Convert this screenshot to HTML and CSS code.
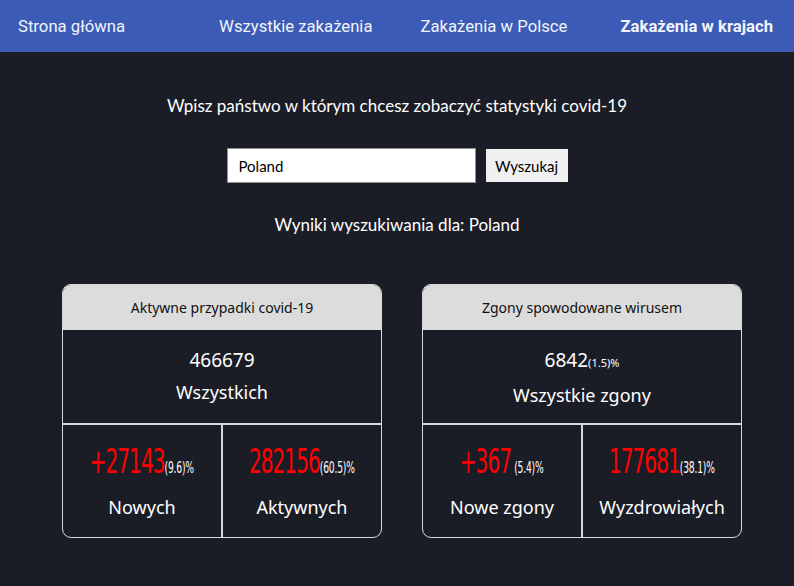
FILE: index.html
```html
<!DOCTYPE html>
<html lang="pl">
<head>
<meta charset="utf-8">
<title>Zakażenia w krajach</title>
<link rel="stylesheet" href="styles.css">
</head>
<body>
<nav class="nav">
  <a class="brand" href="#">Strona główna</a>
  <div class="links">
    <a href="#">Wszystkie zakażenia</a>
    <a href="#">Zakażenia w Polsce</a>
    <a class="active" href="#">Zakażenia w krajach</a>
  </div>
</nav>
<main class="main">
  <p class="prompt">Wpisz państwo w którym chcesz zobaczyć statystyki covid-19</p>
  <form class="search">
    <input class="search-input" type="text" value="Poland">
    <button class="search-btn" type="button">Wyszukaj</button>
  </form>
  <p class="result">Wyniki wyszukiwania dla: Poland</p>
  <div class="cards">
    <section class="card">
      <header class="card-head">Aktywne przypadki covid-19</header>
      <div class="card-top">
        <div class="top-num">466679</div>
        <div class="label">Wszystkich</div>
      </div>
      <div class="card-bottom">
        <div class="cell">
          <div class="big"><span class="red">+27143</span><span class="pct">(9.6)%</span></div>
          <div class="label">Nowych</div>
        </div>
        <div class="cell">
          <div class="big"><span class="red">282156</span><span class="pct">(60.5)%</span></div>
          <div class="label">Aktywnych</div>
        </div>
      </div>
    </section>
    <section class="card">
      <header class="card-head">Zgony spowodowane wirusem</header>
      <div class="card-top">
        <div class="top-num">6842<span class="top-pct">(1.5)%</span></div>
        <div class="label">Wszystkie zgony</div>
      </div>
      <div class="card-bottom">
        <div class="cell">
          <div class="big"><span class="red">+367</span> <span class="pct">(5.4)%</span></div>
          <div class="label">Nowe zgony</div>
        </div>
        <div class="cell">
          <div class="big"><span class="red">177681</span><span class="pct">(38.1)%</span></div>
          <div class="label">Wyzdrowiałych</div>
        </div>
      </div>
    </section>
  </div>
</main>
</body>
</html>
```
FILE: styles.css
```css
html, body {
  margin: 0;
  padding: 0;
  background: #1b1d26;
  height: 100%;
}
body {
  font-family: "Lato", "Noto Sans", sans-serif;
  color: #fff;
}
.nav {
  height: 52px;
  background: #3b5bb6;
  display: flex;
  align-items: center;
  padding: 0 21px 0 18px;
  font-family: "Roboto", sans-serif;
  font-size: 16.7px;
}
.nav a {
  color: #f2f4fb;
  text-decoration: none;
}
.links {
  margin-left: auto;
  display: flex;
  gap: 48px;
}
.links .active {
  font-weight: 700;
  margin-left: 5px;
}
.main {
  display: flex;
  flex-direction: column;
  align-items: center;
}
.prompt {
  margin: 42px 0 0;
  font-size: 17px;
  line-height: 24px;
}
.search {
  margin: 30px 0 0;
  display: flex;
  gap: 10px;
  align-items: center;
}
.search-input {
  box-sizing: border-box;
  width: 249px;
  height: 35px;
  border: 1px solid #8f8f8f;
  padding: 0 11px;
  font-family: "Lato", sans-serif;
  font-size: 15px;
  color: #000;
  background: #fff;
  outline: none;
}
.search-btn {
  height: 33px;
  width: 82px;
  border: none;
  background: #f0f0f0;
  font-family: "Lato", sans-serif;
  font-size: 15px;
  color: #000;
  padding: 0;
}
.result {
  margin: 30px 0 0;
  font-size: 17px;
  line-height: 24px;
}
.cards {
  align-self: stretch;
  display: flex;
  gap: 40px;
  padding-left: 62px;
  margin-top: 47px;
}
.card {
  box-sizing: border-box;
  width: 320px;
  height: 254px;
  border: 1px solid #d9d9d9;
  border-radius: 9px;
  overflow: hidden;
  display: flex;
  flex-direction: column;
  font-family: "Noto Sans", sans-serif;
}
.card-head {
  height: 44px;
  background: #dcdcdc;
  color: #111;
  font-size: 14px;
  display: flex;
  align-items: center;
  justify-content: center;
  border-bottom: 1px solid #d9d9d9;
}
.card-top {
  height: 95px;
  display: flex;
  flex-direction: column;
  align-items: center;
  padding-top: 17px;
  box-sizing: border-box;
  border-bottom: 2px solid #d9d9d9;
}
.top-num {
  font-size: 19px;
  line-height: 26px;
}
.top-pct {
  font-size: 11px;
}
.label {
  font-size: 18px;
  line-height: 26px;
  margin-top: 6px;
}
.card-bottom {
  flex: 1;
  display: flex;
}
.cell {
  flex: 1;
  display: flex;
  flex-direction: column;
  align-items: center;
  padding-top: 17px;
}
.cell + .cell {
  border-left: 2px solid #d9d9d9;
}
.big {
  height: 40px;
  line-height: 40px;
  font-family: "DejaVu Sans Condensed", "Liberation Sans Narrow", sans-serif;
  white-space: nowrap;
  transform: scaleX(0.68);
}
.red {
  color: #ff0000;
  font-size: 33px;
  letter-spacing: -1.5px;
}
.pct {
  font-size: 15px;
  letter-spacing: -0.3px;
}
.cell .label {
  margin-top: 12px;
}
```
